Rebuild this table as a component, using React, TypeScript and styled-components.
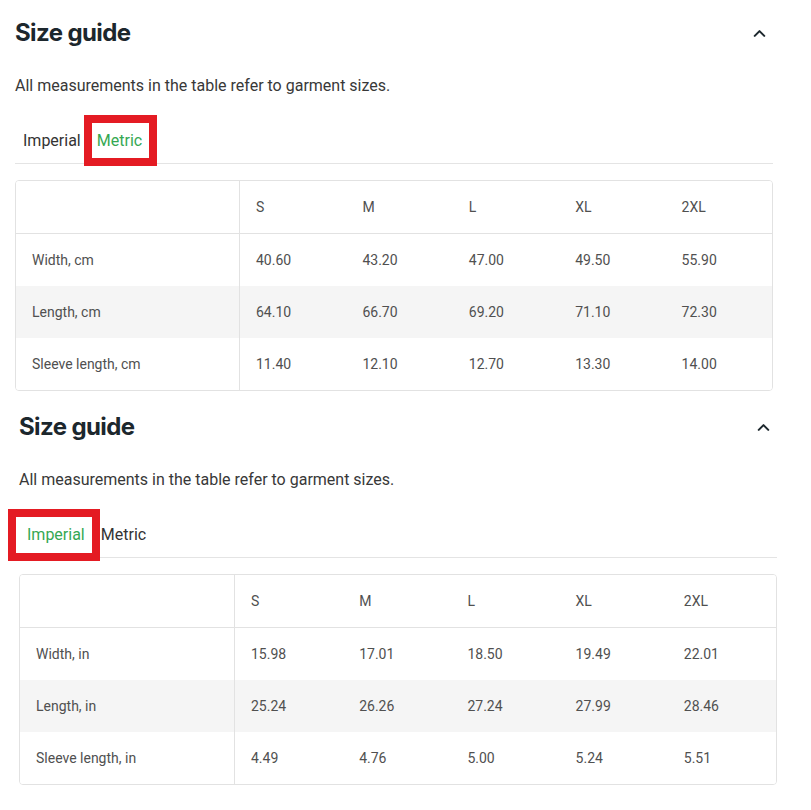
import React, { useState } from 'react';
import styled, { createGlobalStyle } from 'styled-components';
import { ChevronUp } from 'lucide-react';

const GlobalStyle = createGlobalStyle`
  html, body {
    margin: 0;
    padding: 0;
    background: #fff;
  }
  body {
    font-family: Roboto, "Liberation Sans", Arial, sans-serif;
    -webkit-font-smoothing: antialiased;
  }
`;

type Unit = 'imperial' | 'metric';

interface Row {
  label: string;
  values: string[];
}

const SIZES = ['S', 'M', 'L', 'XL', '2XL'];

const DATA: Record<Unit, Row[]> = {
  metric: [
    { label: 'Width, cm', values: ['40.60', '43.20', '47.00', '49.50', '55.90'] },
    { label: 'Length, cm', values: ['64.10', '66.70', '69.20', '71.10', '72.30'] },
    { label: 'Sleeve length, cm', values: ['11.40', '12.10', '12.70', '13.30', '14.00'] }
  ],
  imperial: [
    { label: 'Width, in', values: ['15.98', '17.01', '18.50', '19.49', '22.01'] },
    { label: 'Length, in', values: ['25.24', '26.26', '27.24', '27.99', '28.46'] },
    { label: 'Sleeve length, in', values: ['4.49', '4.76', '5.00', '5.24', '5.51'] }
  ]
};

const Page = styled.main`
  display: flex;
  flex-direction: column;
  gap: 3px;
  width: 811px;
`;

const Section = styled.section<{ $indent: number }>`
  margin-left: ${(p) => p.$indent}px;
  width: 758px;
  box-sizing: border-box;
`;

const Header = styled.header`
  display: flex;
  align-items: center;
  justify-content: space-between;
  height: 34px;
  padding: 16px 4px 0 0;
`;

const Title = styled.h2`
  margin: 0;
  font-family: Inter, "Liberation Sans", sans-serif;
  font-size: 24px;
  font-weight: 700;
  line-height: 34px;
  color: #1c272d;
  letter-spacing: -0.6px;
`;

const Toggle = styled.button`
  display: flex;
  padding: 0;
  border: 0;
  background: none;
  color: #1c272d;
  cursor: pointer;
`;

const Description = styled.p`
  margin: 25px 0 0;
  font-size: 16px;
  line-height: 22px;
  color: #383838;
`;

const Tabs = styled.div`
  display: flex;
  margin-top: 19px;
  border-bottom: 1px solid #e4e4e4;
`;

const Tab = styled.button<{ $active: boolean }>`
  position: relative;
  padding: 13px 8px 10px;
  border: 0;
  background: none;
  font-family: Roboto, "Liberation Sans", sans-serif;
  font-size: 16px;
  line-height: 24px;
  color: ${(p) => (p.$active ? '#35a853' : '#333')};
  cursor: pointer;
`;

// red callout drawn over the selected tab
const Mark = styled.span<{ $l: number; $r: number; $t: number; $b: number }>`
  position: absolute;
  left: ${(p) => p.$l}px;
  right: ${(p) => p.$r}px;
  top: ${(p) => p.$t}px;
  bottom: ${(p) => p.$b}px;
  border: 8px solid #e41b23;
  pointer-events: none;
`;

const Table = styled.div<{ $labelWidth: number }>`
  display: grid;
  grid-template-columns: ${(p) => p.$labelWidth}px repeat(5, 1fr);
  margin-top: 16px;
  border: 1px solid #e2e2e2;
  border-radius: 4px;
  overflow: hidden;
`;

const Cell = styled.div<{ $head?: boolean; $label?: boolean; $shade?: boolean }>`
  display: flex;
  align-items: center;
  height: ${(p) => (p.$head ? 53 : 52)}px;
  padding-left: 16px;
  box-sizing: border-box;
  font-size: 14px;
  color: #505050;
  background: ${(p) => (p.$shade ? '#f5f5f5' : '#fff')};
  border-right: ${(p) => (p.$label ? '1px solid #e2e2e2' : '0')};
  border-bottom: ${(p) => (p.$head ? '1px solid #e2e2e2' : '0')};
`;

interface MarkBox {
  l: number;
  r: number;
  t: number;
  b: number;
}

interface GuideProps {
  initial: Unit;
  indent: number;
  labelWidth: number;
  mark: MarkBox;
}

const SizeGuide = ({ initial, indent, labelWidth, mark }: GuideProps) => {
  const [unit, setUnit] = useState<Unit>(initial);
  const rows = DATA[unit];

  return (
    <Section $indent={indent}>
      <Header>
        <Title>Size guide</Title>
        <Toggle aria-label="Collapse">
          <ChevronUp size={19} strokeWidth={2.6} />
        </Toggle>
      </Header>
      <Description>All measurements in the table refer to garment sizes.</Description>
      <Tabs>
        {(['imperial', 'metric'] as Unit[]).map((u) => (
          <Tab key={u} $active={unit === u} onClick={() => setUnit(u)}>
            {u === 'imperial' ? 'Imperial' : 'Metric'}
            {unit === u && <Mark $l={mark.l} $r={mark.r} $t={mark.t} $b={mark.b} />}
          </Tab>
        ))}
      </Tabs>
      <Table $labelWidth={labelWidth}>
        <Cell $head $label />
        {SIZES.map((s) => (
          <Cell key={s} $head>
            {s}
          </Cell>
        ))}
        {rows.map((row, i) => (
          <React.Fragment key={row.label}>
            <Cell $label $shade={i === 1}>
              {row.label}
            </Cell>
            {row.values.map((v, j) => (
              <Cell key={j} $shade={i === 1}>
                {v}
              </Cell>
            ))}
          </React.Fragment>
        ))}
      </Table>
    </Section>
  );
};

const App = () => (
  <>
    <GlobalStyle />
    <Page>
      <SizeGuide initial="metric" indent={15} labelWidth={224} mark={{ l: -5, r: -7, t: -1, b: -3 }} />
      <SizeGuide initial="imperial" indent={19} labelWidth={215} mark={{ l: -11, r: -7, t: -1, b: -4 }} />
    </Page>
  </>
);

export default App;
